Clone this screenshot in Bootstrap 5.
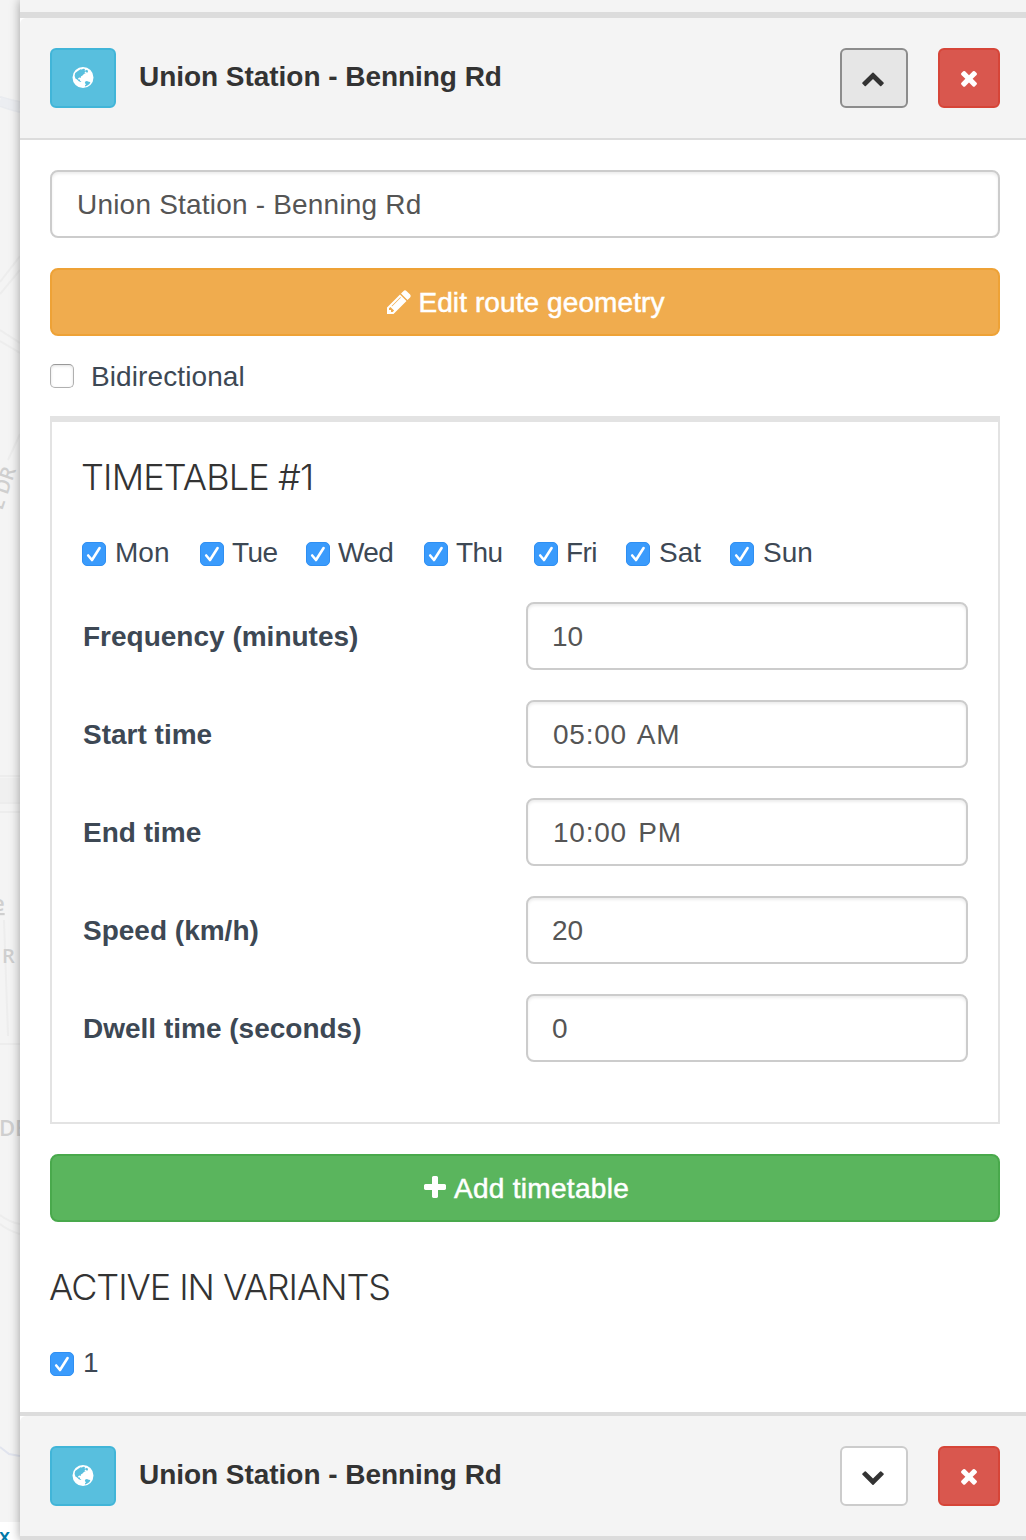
<!DOCTYPE html>
<html lang="en">
<head>
<meta charset="utf-8">
<meta name="viewport" content="width=device-width, initial-scale=1">
<title>Route editor</title>
<link href="https://cdn.jsdelivr.net/npm/bootstrap@5.3.0/dist/css/bootstrap.min.css" rel="stylesheet">
<style>
  body { font-family: "Liberation Sans", Arial, sans-serif; font-size: 28px; line-height: 40px; color: #3d4854; background: #f4f4f4; overflow: hidden; }
  .map-strip { width: 20px; height: 1540px; background: #f4f4f4; }
  .map-strip svg { display: block; }
  .editor { height: 1540px; min-width: 0; background: #fff; box-shadow: 0 0 10px rgba(0,0,0,.36); }
  .prev-route { height: 18px; background: #f4f4f4; border-bottom: 6px solid #dcdcdc; }
  .route-head { height: 122px; padding: 0 26px 0 30px; background: #f4f4f4; border-bottom: 2px solid #dcdcdc; border-top-left-radius: 6px; }
  .route-head.is-closed { height: 124px; border-bottom-width: 4px; }
  .route-title { font-size: 28px; line-height: 40px; font-weight: 700; color: #333; margin: 0 0 0 23px; padding-bottom: 2px; letter-spacing: -.04px; }
  .head-tools { gap: 30px; }
  .btn-tool { height: 60px; padding: 0; border: 2px solid; border-radius: 6px; display: flex; align-items: center; justify-content: center; }
  .btn-tool svg { width: 24px; height: 24px; fill: currentColor; }
  .btn-globe { width: 66px; background: #58bfde; border-color: #41b5d8; color: #fff; }
  .btn-toggle { width: 68px; background: #fff; border-color: #ccc; color: #333; padding-right: 2px; }
  .btn-toggle.is-open { background: #e6e6e6; border-color: #8c8c8c; }
  .btn-remove { width: 62px; background: #d9574e; border-color: #d64538; color: #fff; padding-right: 1px; }
  .route-body { padding: 30px 26px 0 30px; height: 1272px; }
  .form-control { height: 68px; border: 2px solid #ccc; border-radius: 8px; padding: 2px 24px 0; font-size: 28px; line-height: 40px; color: #555; box-shadow: inset 0 2px 3px rgba(0,0,0,.075); }
  .name-value { letter-spacing: .2px; padding-left: 25px; }
  .time-value { letter-spacing: .75px; word-spacing: 3px; padding-left: 25px; }
  .btn-wide { width: 100%; height: 68px; border: 2px solid; border-radius: 8px; color: #fff; font-size: 28px; line-height: 40px; padding: 0; display: flex; align-items: center; justify-content: center; -webkit-text-stroke: .5px #fff; letter-spacing: .1px; }
  .btn-wide svg { width: 28px; height: 28px; fill: #fff; margin-right: 5px; }
  .btn-wide span { padding-top: 2px; }
  .btn-geometry { background: #f0ac4e; border-color: #eea236; margin-top: 30px; }
  .btn-add { background: #5ab55d; border-color: #49a94c; margin-top: 30px; }
  .btn-add span { letter-spacing: .3px; }
  .form-check-input { width: 24px; height: 24px; margin: 0; flex: none; border: 1.5px solid #b0b0b0; border-top-color: #999; border-radius: 6px; box-shadow: inset 0 1px 3px rgba(0,0,0,.12); }
  .form-check-input[type=checkbox] { border-radius: 5px; }
  .form-check-input:checked[type=checkbox] { background-color: #3a9bfc; border: 1px solid #2f8ff2; box-shadow: none; background-size: 22px 22px;
    background-image: url("data:image/svg+xml,%3Csvg xmlns='http://www.w3.org/2000/svg' viewBox='0 0 22 22'%3E%3Cpath d='M5.200 12.500l3.800 4.500 7.600-12' fill='none' stroke='%23fff' stroke-width='2.600' stroke-linecap='round' stroke-linejoin='round'/%3E%3C/svg%3E"); }
  .check-line { display: flex; align-items: center; height: 40px; }
  .check-line label { padding-bottom: 2px; margin-left: 9px; }
  .bidi { margin: 20px 0; }
  .bidi label { margin-left: 17px; padding: 1px 0 0; letter-spacing: .1px; }
  .days { margin: 32px 0 28px; }
  .days .tight label { letter-spacing: -.6px; margin-left: 8px; }
  .timetable { height: 708px; border: 2px solid #e3e3e3; border-top-width: 6px; padding: 30px; }
  .thin-title { font-family: Inter, "Liberation Sans", sans-serif; font-weight: 300; font-size: 36px; line-height: 50px; color: #333; margin: 0; white-space: nowrap; letter-spacing: -.85px; text-indent: -1px; }
  .variants-title { margin-top: 40px; letter-spacing: -1.05px; }
  .field-line { height: 68px; margin-bottom: 30px; }
  .field-line > label { font-weight: 700; width: 444px; flex: none; padding: 2px 0 0 1px; }
  .closing-rule { height: 4px; background: #dcdcdc; }
</style>
</head>
<body>
<div class="d-flex">
  <aside class="map-strip flex-shrink-0">
    <svg width="20" height="1540" viewBox="0 0 20 1540">
      <g fill="none" stroke="#ededed" stroke-width="2">
        <path d="M0 97q10 3 20 5M0 106q10 4 20 6" stroke="#e9ebef"/>
        <path d="M0 101q10 4 20 6" stroke="#eceef2" stroke-width="8"/>
        <path d="M0 282L20 256M0 294L20 270M0 330L20 343M0 341L20 353M8 460L20 434M0 776H20M0 803H20M0 812H20M4 920L8 1036M0 1044H20"/>
        <path d="M0 790H20" stroke="#f0f0f0" stroke-width="24"/>
        <path d="M0 1215q9 7 20 9M0 1224q9 7 20 10"/>
        <path d="M0 1447l9 7 11 2" stroke="#e1e4ee"/>
      </g>
      <g font-family="Open Sans, sans-serif" font-weight="600" fill="#cfcfcf">
        <text font-size="20" transform="translate(2 511) rotate(-71)">E DR</text>
        <text x="2" y="963" font-size="20">R</text>
        <text x="-1" y="1136" font-size="22">DE</text>
        <text x="-8" y="911" font-size="22" text-decoration="underline">e</text>
      </g>
      <path d="M0 1522H20V1540H0z" fill="#fff"/>
      <text x="-1" y="1543" font-family="Open Sans, sans-serif" font-size="20" font-weight="600" fill="#0078a8">x</text>
    </svg>
  </aside>

  <main class="editor flex-grow-1 position-relative">
    <div class="prev-route"></div>

    <header class="route-head d-flex align-items-center">
      <button class="btn btn-tool btn-globe" type="button" aria-label="Show on map">
        <svg viewBox="0 0 24 24"><path fill-rule="evenodd" d="M12 1a10.500 10.500 0 1 0 0 21a10.500 10.500 0 1 0 0-21zM6.500 5.200l3-1.900 1.400.2 1.300-.7 2 .2-.9 1.200 1.600.3.600-.8 1.600 1.100-.4 1.700-1.300.1-.8-1.200-1.200.9 1.300.9-1.500.6-1.700 1.800-1.600 1-.2 1.500-1.300-.7-1.300.8.300 1.300 1.400.1.400 1.500 1.200.5-.6.500-2-.8-1.700-1.900-1.700-.9-.8-2.800.6-2.700zM14.300 15.600l1.600-.7 1.800.9 1.700.2-.9 1.900-2.100 1.700-2.200.8-.3-1 1.100-1.100-1.200-1.200z"/></svg>
      </button>
      <h2 class="route-title">Union Station - Benning Rd</h2>
      <div class="head-tools d-flex ms-auto">
        <button class="btn btn-tool btn-toggle is-open" type="button" aria-label="Collapse">
          <svg viewBox="0 0 1792 1792"><path d="M1683 1331l-166 165q-19 19-45 19t-45-19l-531-531-531 531q-19 19-45 19t-45-19l-166-165q-19-19-19-45.500t19-45.500l742-741q19-19 45-19t45 19l742 741q19 19 19 45.500t-19 45.500z"/></svg>
        </button>
        <button class="btn btn-tool btn-remove" type="button" aria-label="Remove">
          <svg viewBox="0 0 1792 1792"><path d="M1490 1322q0 40-28 68l-136 136q-28 28-68 28t-68-28l-294-294-294 294q-28 28-68 28t-68-28l-136-136q-28-28-28-68t28-68l294-294-294-294q-28-28-28-68t28-68l136-136q28-28 68-28t68 28l294 294 294-294q28-28 68-28t68 28l136 136q28 28 28 68t-28 68l-294 294 294 294q28 28 28 68z"/></svg>
        </button>
      </div>
    </header>

    <section class="route-body">
      <input class="form-control name-value" type="text" value="Union Station - Benning Rd" aria-label="Route name">
      <button class="btn btn-wide btn-geometry" type="button">
        <svg viewBox="0 0 1792 1792"><path d="M491 1536l91-91-235-235-91 91v107h128v128h107zm523-928q0-22-22-22-10 0-17 7l-542 542q-7 7-7 17 0 22 22 22 10 0 17-7l542-542q7-7 7-17zm-54-192l416 416-832 832h-416v-416zm683 96q0 53-37 90l-166 166-416-416 166-165q36-38 90-38 53 0 91 38l235 234q37 39 37 91z"/></svg>
        <span>Edit route geometry</span>
      </button>
      <div class="check-line bidi">
        <input class="form-check-input" type="checkbox" id="bidi"><label for="bidi">Bidirectional</label>
      </div>

      <div class="timetable">
        <h3 class="thin-title">TIMETABLE #1</h3>
        <div class="d-flex days">
          <div class="check-line" style="width:118px"><input class="form-check-input" type="checkbox" id="d1" checked><label for="d1">Mon</label></div>
          <div class="check-line tight" style="width:106px"><input class="form-check-input" type="checkbox" id="d2" checked><label for="d2">Tue</label></div>
          <div class="check-line tight" style="width:118px"><input class="form-check-input" type="checkbox" id="d3" checked><label for="d3">Wed</label></div>
          <div class="check-line tight" style="width:110px"><input class="form-check-input" type="checkbox" id="d4" checked><label for="d4">Thu</label></div>
          <div class="check-line tight" style="width:92px"><input class="form-check-input" type="checkbox" id="d5" checked><label for="d5">Fri</label></div>
          <div class="check-line" style="width:104px"><input class="form-check-input" type="checkbox" id="d6" checked><label for="d6">Sat</label></div>
          <div class="check-line"><input class="form-check-input" type="checkbox" id="d7" checked><label for="d7">Sun</label></div>
        </div>
        <div class="field-line d-flex align-items-center"><label for="f1">Frequency (minutes)</label><input class="form-control" id="f1" type="text" value="10"></div>
        <div class="field-line d-flex align-items-center"><label for="f2">Start time</label><input class="form-control time-value" id="f2" type="text" value="05:00 AM"></div>
        <div class="field-line d-flex align-items-center"><label for="f3">End time</label><input class="form-control time-value" id="f3" type="text" value="10:00 PM"></div>
        <div class="field-line d-flex align-items-center"><label for="f4">Speed (km/h)</label><input class="form-control" id="f4" type="text" value="20"></div>
        <div class="field-line d-flex align-items-center"><label for="f5">Dwell time (seconds)</label><input class="form-control" id="f5" type="text" value="0"></div>
      </div>

      <button class="btn btn-wide btn-add" type="button">
        <svg viewBox="0 0 1792 1792"><path d="M1600 736v192q0 40-28 68t-68 28h-416v416q0 40-28 68t-68 28h-192q-40 0-68-28t-28-68v-416h-416q-40 0-68-28t-28-68v-192q0-40 28-68t68-28h416v-416q0-40 28-68t68-28h192q40 0 68 28t28 68v416h416q40 0 68 28t28 68z"/></svg>
        <span>Add timetable</span>
      </button>
      <h3 class="thin-title variants-title">ACTIVE IN VARIANTS</h3>
      <div class="check-line" style="margin-top:32px"><input class="form-check-input" type="checkbox" id="v1" checked><label for="v1">1</label></div>
    </section>

    <div class="closing-rule"></div>
    <header class="route-head is-closed d-flex align-items-center">
      <button class="btn btn-tool btn-globe" type="button" aria-label="Show on map">
        <svg viewBox="0 0 24 24"><path fill-rule="evenodd" d="M12 1a10.500 10.500 0 1 0 0 21a10.500 10.500 0 1 0 0-21zM6.500 5.200l3-1.900 1.400.2 1.300-.7 2 .2-.9 1.200 1.600.3.600-.8 1.600 1.100-.4 1.700-1.300.1-.8-1.200-1.200.9 1.300.9-1.500.6-1.700 1.800-1.600 1-.2 1.500-1.300-.7-1.300.8.300 1.300 1.400.1.400 1.500 1.200.5-.6.500-2-.8-1.700-1.900-1.700-.9-.8-2.800.6-2.700zM14.300 15.600l1.600-.7 1.800.9 1.700.2-.9 1.900-2.100 1.700-2.200.8-.3-1 1.100-1.100-1.200-1.200z"/></svg>
      </button>
      <h2 class="route-title">Union Station - Benning Rd</h2>
      <div class="head-tools d-flex ms-auto">
        <button class="btn btn-tool btn-toggle" type="button" aria-label="Expand">
          <svg viewBox="0 0 1792 1792"><path d="M1683 808l-742 741q-19 19-45 19t-45-19l-742-741q-19-19-19-45.500t19-45.500l166-165q19-19 45-19t45 19l531 531 531-531q19-19 45-19t45 19l166 165q19 19 19 45.500t-19 45.500z"/></svg>
        </button>
        <button class="btn btn-tool btn-remove" type="button" aria-label="Remove">
          <svg viewBox="0 0 1792 1792"><path d="M1490 1322q0 40-28 68l-136 136q-28 28-68 28t-68-28l-294-294-294 294q-28 28-68 28t-68-28l-136-136q-28-28-28-68t28-68l294-294-294-294q-28-28-28-68t28-68l136-136q28-28 68-28t68 28l294 294 294-294q28-28 68-28t68 28l136 136q28 28 28 68t-28 68l-294 294 294 294q28 28 28 68z"/></svg>
        </button>
      </div>
    </header>
  </main>
</div>
<script src="https://cdn.jsdelivr.net/npm/bootstrap@5.3.0/dist/js/bootstrap.bundle.min.js"></script>
</body>
</html>
